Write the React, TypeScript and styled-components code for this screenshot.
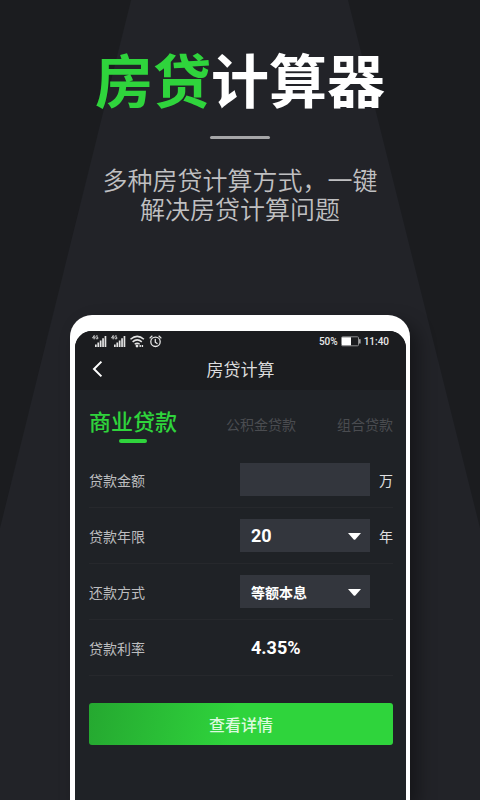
import React, { useState } from "react";
import styled, { createGlobalStyle } from "styled-components";

const GlobalStyle = createGlobalStyle`
  * { box-sizing: border-box; }
  body {
    margin: 0;
    background: #1b1c1f;
    font-family: "Noto Sans CJK SC", sans-serif;
  }
  button, input, select { font: inherit; margin: 0; border: 0; }
`;

const Page = styled.main`
  position: relative;
  isolation: isolate;
  display: flex;
  flex-direction: column;
  align-items: center;
  min-height: 100vh;
  padding: 46px 70px 0;
  overflow: hidden;

  &::before {
    content: "";
    position: absolute;
    inset: 0;
    z-index: -1;
    background: #222328;
    clip-path: polygon(27.3% 0, 72.5% 0, 100% 66%, 100% 100%, 0 100%, 0 66%);
  }
`;

const Title = styled.h1`
  margin: 0;
  color: #fff;
  font-size: 58px;
  font-weight: 700;
  line-height: 64px;
  white-space: nowrap;

  em { color: #2fd43c; font-style: normal; }
`;

const Rule = styled.hr`
  width: 60px;
  height: 3px;
  margin: 26px 0;
  border: 0;
  border-radius: 2px;
  background: #a6a6a8;
`;

const Tagline = styled.p`
  margin: 0 0 92px;
  color: #c0c0c2;
  font-size: 25px;
  font-weight: 350;
  line-height: 29px;
  text-align: center;
  white-space: nowrap;
`;

const Phone = styled.section`
  display: flex;
  flex: 1;
  width: 100%;
  padding: 16px 4px 0 5px;
  border-radius: 22px 22px 0 0;
  background: #fff;
  box-shadow: 8px 8px 18px rgba(0, 0, 0, 0.38);
`;

const Screen = styled.div`
  flex: 1;
  overflow: hidden;
  border-radius: 17px 17px 0 0;
  background: #1f2226;
`;

const TopBar = styled.header`
  background: #1b1c1f;
`;

const StatusBar = styled.div`
  display: flex;
  align-items: center;
  justify-content: space-between;
  height: 20px;
  padding: 0 17px;
  color: #e8e8e8;
  font-family: Roboto, sans-serif;
  font-size: 10px;
  font-weight: 500;
`;

const StatusGroup = styled.div<{ $gap: number }>`
  display: flex;
  align-items: center;
  gap: ${(p) => p.$gap}px;
`;

const NavBar = styled.div`
  display: grid;
  grid-template-columns: 40px 1fr 40px;
  align-items: center;
  height: 39px;
  padding-bottom: 3px;
`;

const BackButton = styled.button`
  display: flex;
  align-items: center;
  height: 36px;
  padding: 0 0 0 16px;
  background: none;
`;

const NavTitle = styled.h2`
  margin: 0;
  color: #dcdcdd;
  font-size: 17px;
  font-weight: 400;
  line-height: 24px;
  text-align: center;
`;

const Content = styled.form`
  padding: 14px 13px 0 14px;
`;

const Tabs = styled.div`
  display: flex;
  align-items: flex-start;
  justify-content: space-between;
  height: 48px;
`;

const Tab = styled.button<{ $active: boolean }>`
  display: flex;
  flex-direction: column;
  align-items: center;
  gap: 3px;
  margin-right: ${(p) => (p.$active ? "8px" : "0")};
  padding: ${(p) => (p.$active ? "0" : "4px 0 0")};
  background: none;
  color: ${(p) => (p.$active ? "#2fd43c" : "#4a4c50")};
  font-size: ${(p) => (p.$active ? "22px" : "14px")};
  font-weight: ${(p) => (p.$active ? 500 : 400)};
  line-height: 32px;
  white-space: nowrap;

  &::after {
    content: "";
    display: ${(p) => (p.$active ? "block" : "none")};
    width: 28px;
    height: 4px;
    border-radius: 2px;
    background: #2fd43c;
  }
`;

const Row = styled.div`
  display: grid;
  grid-template-columns: 1fr 130px 23px;
  align-items: center;
  height: 56px;
  border-bottom: 1px solid #26282c;
`;

const Label = styled.label`
  color: #bcbdbf;
  font-size: 14px;
  line-height: 20px;
`;

const Unit = styled.span`
  color: #e0e0e1;
  font-size: 14px;
  line-height: 20px;
  text-align: right;
`;

const AmountInput = styled.input`
  width: 100%;
  height: 33px;
  padding: 0 11px;
  border-radius: 0;
  background: #33363d;
  color: #fff;
`;

const SelectBox = styled.div`
  position: relative;

  svg {
    position: absolute;
    top: 14px;
    right: 9px;
    pointer-events: none;
  }
`;

const Select = styled.select<{ $numeric?: boolean }>`
  appearance: none;
  display: block;
  width: 100%;
  height: 33px;
  padding: 0 30px 0 11px;
  border-radius: 0;
  background: #33363d;
  color: #fff;
  font-family: ${(p) => (p.$numeric ? "Roboto" : '"Noto Sans CJK SC"')}, sans-serif;
  font-size: ${(p) => (p.$numeric ? "18px" : "14px")};
  font-weight: 700;
`;

const Rate = styled.output`
  padding-left: 11px;
  color: #fff;
  font-family: Roboto, sans-serif;
  font-size: 18px;
  font-weight: 700;
`;

const SubmitButton = styled.button`
  width: 100%;
  height: 42px;
  margin-top: 27px;
  border-radius: 3px;
  background: linear-gradient(100deg, #25a830 0%, #2fd43c 48%);
  color: #dcfade;
  font-size: 16px;
  font-weight: 500;
`;

const Signal = () => (
  <svg width="15" height="13" viewBox="0 0 15 13" fill="#e4e4e4" aria-hidden="true">
    <path d="M2.2.4.5 2.9h2.3M2.2.4v4M6 1.2Q3.8-.2 3.8 2.3T5.9 3.7V2.5H5" fill="none" stroke="#e4e4e4" strokeWidth="0.8" />
    <path d="M3 9.4h1.7V12H3zM5.4 7.6h1.7V12H5.4zM7.8 5.6h1.7V12H7.8zM10.2 3.3h1.7V12h-1.7zM12.6 1h1.7v11h-1.7z" />
  </svg>
);

const Wifi = () => (
  <svg width="15" height="13" viewBox="0 0 15 13" fill="none" stroke="#e4e4e4" strokeWidth="1.5" aria-hidden="true">
    <path d="M.5 4.3q6.7-5.8 13.4 0M2.6 6.9q4.6-4 9.2 0M4.7 9.3q2.5-2.1 5 0" />
    <circle cx="7" cy="11" r="1.4" fill="#e4e4e4" stroke="none" />
    <path d="M10.2 9.9v2M12.4 9.9v2" strokeWidth="1.4" />
  </svg>
);

const Alarm = () => (
  <svg width="13" height="13" viewBox="0 0 13 13" fill="none" stroke="#e4e4e4" strokeWidth="1.3" strokeLinecap="round" aria-hidden="true">
    <circle cx="6.5" cy="6.8" r="4.7" />
    <path d="M6.3 4.3v2.9l1.8 1.4M1 2.9 3 1.1M12 2.9 10 1.1" />
  </svg>
);

const Battery = () => (
  <svg width="20" height="11" viewBox="0 0 20 11" aria-hidden="true">
    <rect x=".5" y=".8" width="17" height="9" rx="1" fill="none" stroke="#8c8d8f" />
    <rect x="1" y="1.3" width="9" height="8" fill="#fff" />
    <rect x="18.2" y="3.2" width="1.3" height="4.3" fill="#c8c8c8" />
  </svg>
);

const Caret = () => (
  <svg width="13" height="7" viewBox="0 0 13 7" aria-hidden="true">
    <path d="M0 0h13L7.3 6.4q-.8.8-1.6 0z" fill="#fff" />
  </svg>
);

const TABS = ["商业贷款", "公积金贷款", "组合贷款"];

export default function App() {
  const [tab, setTab] = useState(0);
  return (
    <>
      <GlobalStyle />
      <Page>
        <Title><em>房贷</em>计算器</Title>
        <Rule />
        <Tagline>多种房贷计算方式，一键<br />解决房贷计算问题</Tagline>
        <Phone>
          <Screen>
            <TopBar>
              <StatusBar>
                <StatusGroup $gap={4}><Signal /><Signal /><Wifi /><Alarm /></StatusGroup>
                <StatusGroup $gap={3}><span>50%</span><Battery /><span>11:40</span></StatusGroup>
              </StatusBar>
              <NavBar>
                <BackButton type="button" aria-label="返回">
                  <svg width="12" height="18" viewBox="0 0 12 18" fill="none" stroke="#fff" strokeWidth="2" aria-hidden="true">
                    <path d="M10.4 1.6 3 9l7.4 7.4" />
                  </svg>
                </BackButton>
                <NavTitle>房贷计算</NavTitle>
              </NavBar>
            </TopBar>
            <Content onSubmit={(e) => e.preventDefault()}>
              <Tabs role="tablist">
                {TABS.map((name, i) => (
                  <Tab key={name} type="button" role="tab" aria-selected={tab === i} $active={tab === i} onClick={() => setTab(i)}>
                    {name}
                  </Tab>
                ))}
              </Tabs>
              <Row>
                <Label htmlFor="amount">贷款金额</Label>
                <AmountInput id="amount" inputMode="decimal" />
                <Unit>万</Unit>
              </Row>
              <Row>
                <Label htmlFor="years">贷款年限</Label>
                <SelectBox>
                  <Select id="years" $numeric defaultValue="20">
                    <option>10</option>
                    <option>20</option>
                    <option>30</option>
                  </Select>
                  <Caret />
                </SelectBox>
                <Unit>年</Unit>
              </Row>
              <Row>
                <Label htmlFor="method">还款方式</Label>
                <SelectBox>
                  <Select id="method">
                    <option>等额本息</option>
                    <option>等额本金</option>
                  </Select>
                  <Caret />
                </SelectBox>
              </Row>
              <Row>
                <Label htmlFor="rate">贷款利率</Label>
                <Rate id="rate">4.35%</Rate>
              </Row>
              <SubmitButton type="submit">查看详情</SubmitButton>
            </Content>
          </Screen>
        </Phone>
      </Page>
    </>
  );
}
